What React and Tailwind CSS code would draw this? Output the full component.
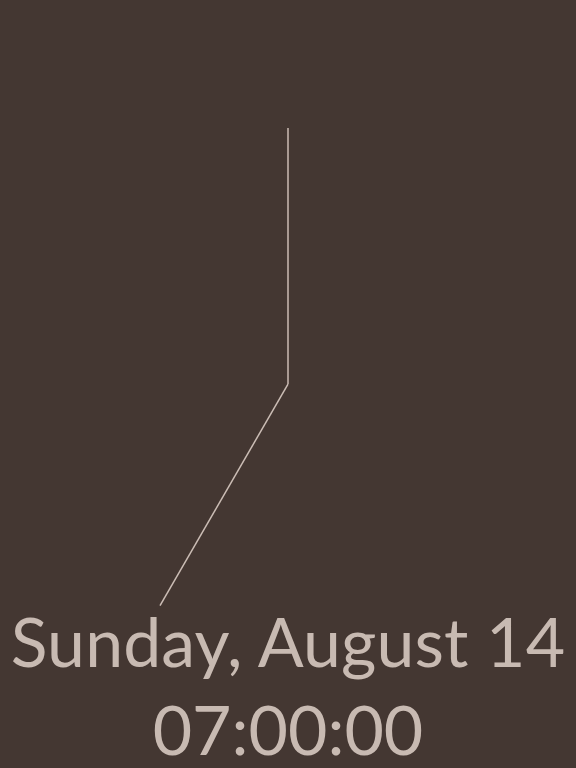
export default function App() {
  return (
    <div className="relative w-[576px] h-[768px] overflow-hidden bg-[#443732] flex flex-col items-center pt-[598px]">
      <svg className="absolute inset-0" width="576" height="768" viewBox="0 0 576 768">
        <line x1="288" y1="384" x2="288" y2="128" stroke="#cbbdb5" strokeWidth="1.5" />
        <line x1="288" y1="384" x2="160" y2="605.7" stroke="#cbbdb5" strokeWidth="1.5" />
      </svg>
      <div className="relative flex flex-col items-center text-[#c8bab2] font-['Lato',sans-serif] text-[68px] leading-[85px] whitespace-nowrap tabular-nums">
        <div className="tracking-[0.1px]">Sunday, August 14</div>
        <div className="mt-[3px]">07:00:00</div>
      </div>
    </div>
  );
}
